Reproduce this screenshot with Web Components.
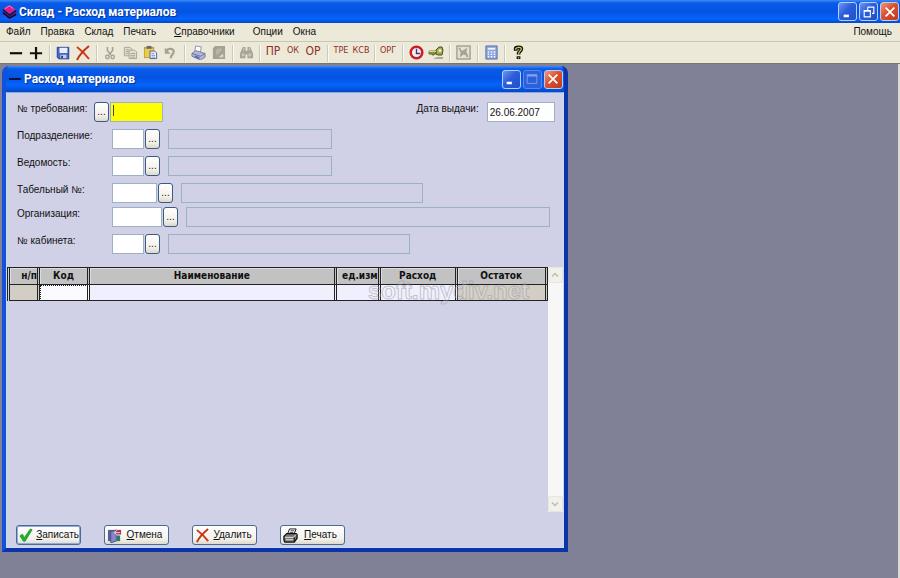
<!DOCTYPE html>
<html lang="ru">
<head>
<meta charset="utf-8">
<title>Склад - Расход материалов</title>
<style>
  html, body { margin: 0; height: 100%; }
  body { font: 10px/14px "Liberation Sans", sans-serif; color: #111; background: #808096; overflow: hidden; }
</style>
</head>
<body>
<stock-app></stock-app>

<script>
const define = (name, html, setup) => {
  const tpl = document.createElement('template');
  tpl.innerHTML = html;
  customElements.define(name, class extends HTMLElement {
    constructor() {
      super();
      this.attachShadow({ mode: 'open' }).append(tpl.content.cloneNode(true));
    }
    connectedCallback() { if (setup && !this.ready) { this.ready = true; setup(this, this.shadowRoot); } }
  });
};

const svg = (size, body) => `<svg width="${size}" height="${size}" viewBox="0 0 16 16" fill="none" aria-hidden="true">${body}</svg>`;

const ICONS = {
  books: '<path d="M1 5 8 1l7 5-7 5z" fill="#d0208c"/><path d="m1 5 7 6v2L1 7zM8 11l7-5v2l-7 5z" fill="#16103c"/><path d="m1 8 7 5 7-4v3l-7 4-7-5z" fill="#6a1166"/><path d="m3 5 5-3 4 3" stroke="#ff7cc8"/><path d="m1 9 7 6 7-4" stroke="#120a2a" stroke-width="1.4"/>',
  minus: '<path d="M1 7h14v2.500H1z" fill="#111"/>',
  plus: '<path d="M1 7h14v2.500H1zM6.800 1h2.500v14H6.800z" fill="#111"/>',
  save: '<path d="M1 1h14v14H3l-2-2z" fill="#4668c8"/><path d="M4 1h9v7H4z" fill="#e8eefc"/><path d="M5 10h7v5H5z" fill="#c8cce0"/><path d="M6 11h2v3H6z" fill="#24387e"/><path d="M1.500 1.500h13v13h-11l-2-2z" stroke="#32489c"/>',
  cross: '<path d="M2 2c4 3 9 8 12 12" stroke="#d23a18" stroke-width="2"/><path d="M14 1C9 5 5 9 2 15" stroke="#c23418" stroke-width="2"/>',
  cut: '<path d="M5 1v4l4 5M11 1v4l-4 5" stroke="#a5a294" stroke-width="1.800"/><circle cx="5" cy="12.500" r="2" stroke="#a5a294" stroke-width="1.600"/><circle cx="11" cy="12.500" r="2" stroke="#a5a294" stroke-width="1.600"/>',
  copy: '<path d="M1.500 2.500h6l2 2v7h-8z" fill="#e2dfd0" stroke="#a5a294"/><path d="M6.500 5.500h6l2 2v7h-8z" fill="#e2dfd0" stroke="#a5a294"/><path d="M3 5h3M3 7h3M3 9h3M8 9h5M8 11h5M8 13h5" stroke="#a5a294"/>',
  paste: '<path d="M1 2h11v12H1z" fill="#c8a038"/><path d="M2 4h9v9H2z" fill="#e8cc50"/><path d="M4 1h5v3H4z" fill="#666a78"/><path d="M7.500 6.500h5l2 2v6h-7z" fill="#f4f6ff" stroke="#4a5a9a"/><path d="M9 9h3M9 11h4M9 13h4" stroke="#7c8cc4"/>',
  undo: '<path d="M3 5c3-4 10-3 10 1 0 4-4 4-4 9" stroke="#a5a294" stroke-width="3"/><path d="M1 1v8h8z" fill="#a5a294"/>',
  printer: '<path d="m5 1 6 1-1 6-6-1z" fill="#fff" stroke="#8890b4"/><path d="m1 9 4-3 10 3v4l-5 3-9-4z" fill="#b4b8d4" stroke="#777ca0"/><path d="m1 9 9 3 5-3" stroke="#6c7098"/><path d="m4 12 5 2" stroke="#4a68d0" stroke-width="2"/>',
  preview: '<path d="M4 1h11v14H2V4z" fill="#a5a294"/><path d="M5 8a4 4 0 0 1 7-3l-6 6z" fill="#b9b6a8"/><path d="m8 13 5-4v4z" fill="#dedbcc"/>',
  find: '<path d="M4 2h3v4h2V2h3l3 7v5H9v-4H7v4H1V9z" fill="#a8a597"/><path d="M3 9h3v3H3zM10 9h3v3h-3z" fill="#c9c6b7"/><path d="M5 3v3M11 3v3" stroke="#d0cdbe"/>',
  clock: '<circle cx="8" cy="8" r="6.200" fill="#f7edf4" stroke="#cc1c24" stroke-width="2.600"/><path d="M8 4v5h4" stroke="#3a3a7c" stroke-width="1.500"/>',
  key: '<path d="M9 12h6v2H5z" fill="#aaa799"/><path d="M1 6h8v3H6v1H4V9H1z" fill="#8b9040" stroke="#5c602c" stroke-width=".8"/><path d="m8 5 3-3h3l1 3-1 5h-4L8 9z" fill="#a8ac48" stroke="#4c5020"/><circle cx="12" cy="5.500" r="1.500" fill="#ece9d8"/><path d="M1 6.500h7" stroke="#d6da84"/>',
  frame: '<path d="M1 1h14v14H1z" fill="#e4e1d2" stroke="#a5a294" stroke-width="1.600"/><path d="m3 4 4 2 5-3-1 4 2 5-5-2-4 3 1-5z" fill="#a5a294"/><path d="M3 3h2v2H3zM11 11h2v2h-2z" fill="#a5a294"/>',
  calc: '<path d="M2 1h12v14H2z" fill="#8fa3dc" stroke="#5570ac"/><path d="M4 3h8v2H4z" fill="#eef4ff"/><path d="M4 7.500h8M4 10h8M4 12.500h8" stroke="#fff" stroke-width="1.500" stroke-dasharray="1.600 1.600"/>',
  help: '<path d="M5 6V4c0-2 6-2 6 0 0 3-3 2-3 6" stroke="#111" stroke-width="4"/><path d="M6 12h4v3H6z" fill="#111"/><path d="M5 5V4c1-2 6-2 6 0 0 3-3 2-3 6" stroke="#c8cc4a" stroke-width="1.400"/><path d="M7.300 13h1.400v1.300H7.300z" fill="#c8cc4a"/>',
  check: '<path d="m1 9 3-2 2 4 7-10 2 1L7 15H5z" fill="#20b428" stroke="#128a1a" stroke-width=".8"/>',
  exit: '<path d="M1 2h7v12H1z" fill="#5a5e9c"/><path d="m4 4 6-2v12l-6 2z" fill="#8488c8" stroke="#44487c" stroke-width=".8"/><path d="M9 2h6v5H9z" fill="#b42c58"/><path d="M8 5h6M11 2 8 5l3 3" stroke="#f2d6e4"/><path d="M10 8h4v6h-4z" fill="#2c7c68"/>',
  print: '<path d="m5 6 2-5h7l-2 5z" fill="#fff" stroke="#111"/><path d="M8 3h4M7 5h4" stroke="#333"/><path d="m1 9 3-3h10l1 1v4l-3 4H2l-1-2z" fill="#777" stroke="#111" stroke-width="1.400"/><path d="M2 10h9l3-3M3 12.500h8" stroke="#e8e8e8"/><path d="M12 10v4" stroke="#111"/>',
  wmin: '<path d="M3 11h6v3H3z" fill="#fff"/>',
  wmax: '<path d="M2.500 3h11v10h-11z" stroke="#7fa4ee"/><path d="M2.500 4h11" stroke="#7fa4ee" stroke-width="2"/>',
  wrestore: '<path d="M6.500 2.500h7v7h-2M6.500 2.500V6" stroke="#fff" stroke-width="1.300"/><path d="M2.500 6.500h7v7h-7zM3 7h6" stroke="#fff" stroke-width="1.300"/>',
  wclose: '<path d="m3 3 10 10M13 3 3 13" stroke="#fff" stroke-width="2"/>',
  up: '<path d="m4 10 4-4 4 4" stroke="#bdbdb4" stroke-width="2"/>',
  down: '<path d="m4 6 4 4 4-4" stroke="#bdbdb4" stroke-width="2"/>'
};

define('app-icon', `<style>:host{display:inline-flex;flex:none}svg{display:block}</style><span></span>`,
  (el, root) => { root.querySelector('span').innerHTML = svg(el.getAttribute('size') || 14, ICONS[el.getAttribute('name')]); });

define('caption-button', `
<style>
  :host { display: block; flex: none; }
  button { display: grid; place-items: center; box-sizing: border-box; width: 19px; height: 19px; padding: 0; border: 1px solid #b8cdf8; border-radius: 3px;
    background: linear-gradient(135deg, #6c98f4, #2a5cdc 45%, #2350c4); }
  :host([kind=wclose]) button { background: linear-gradient(135deg, #f0987c, #dc5030 45%, #bc3c1c); }
  :host([muted]) button { border-color: #5c86e4; background: #2c60dc; }
</style>
<button type="button"></button>`,
  (el, root) => {
    const button = root.querySelector('button');
    button.innerHTML = svg(14, ICONS[el.getAttribute('kind')]);
    button.setAttribute('aria-label', el.getAttribute('label'));
  });

define('title-bar', `
<style>
  :host { display: flex; align-items: center; gap: 2px; box-sizing: border-box; height: 23px; padding: 0 1px 0 2px; color: #fff;
    background: linear-gradient(#3c8cf8 0, #0a5ae8 3px, #0454e4 12px, #0464fc 19px, #0448c8 100%);
    font: bold 12px/16px Roboto, "Liberation Sans", sans-serif; text-shadow: 1px 1px 1px #10308c; }
  h1 { flex: 1; min-width: 0; margin: 0; font: inherit; white-space: nowrap; }
  .icon { display: flex; }
</style>
<span class="icon"><slot name="icon"></slot></span><h1><slot></slot></h1><slot name="buttons"></slot>`);

define('menu-bar', `
<style>
  :host { display: block; background: #ece9d8; border-bottom: 1px solid #c9c6b8; box-shadow: 0 1px #fbfaf4; }
  nav { display: flex; gap: 10px; padding: 1px 8px 2px 6px; }
  button { padding: 0; border: 0; background: none; color: inherit; font: inherit; line-height: 15px; }
  .spaced { margin: 0 8px; }
  .last { margin-left: auto; }
</style>
<nav>
  <button type="button">Файл</button><button type="button">Правка</button><button type="button">Склад</button><button type="button">Печать</button>
  <button type="button" class="spaced"><u>С</u>правочники</button><button type="button">Опции</button><button type="button">Окна</button>
  <button type="button" class="last">Помощь</button>
</nav>`);

define('tool-button', `
<style>
  :host { display: block; flex: none; width: 20px; }
  button { display: grid; place-items: center; box-sizing: border-box; width: 100%; height: 20px; padding: 0 0 1px; border: 0; background: none;
    color: #903028; font: 9px/14px "DejaVu Sans Condensed", "DejaVu Sans", sans-serif; white-space: nowrap; }
  :host([text]) button { padding-bottom: 6px; }
  :host([big]) button { font-size: 12px; padding-bottom: 4px; }
</style>
<button type="button"><slot></slot></button>`,
  (el, root) => { if (el.title) root.querySelector('button').setAttribute('aria-label', el.title); });

define('tool-sep', `
<style>
  :host { display: grid; place-items: center; flex: none; width: 7px; }
  :host([wide]) { width: 8px; }
  i { width: 1px; height: 17px; background: #cdcabb; box-shadow: 1px 0 #faf9f2; }
</style><i></i>`);

define('tool-bar', `
<style>
  :host { display: flex; align-items: center; padding: 1px 6px 0; height: 20px; background: #ece9d8; border-bottom: 1px solid #77756c; }
</style><slot></slot>`);

define('lookup-row', `
<style>
  :host { display: flex; align-items: flex-start; --code: 32px; --name: 164px; }
  label { flex: none; width: 95px; line-height: 14px; white-space: nowrap; }
  input { box-sizing: border-box; height: 20px; border: 1px solid #9cb0c8; padding: 0 3px; font: inherit; min-width: 0; }
  .code { flex: none; width: var(--code); background: #fff; }
  button { flex: none; width: 15px; height: 20px; margin: 0 8px 0 1px; padding: 0; border: 1px solid #3a5c84; border-radius: 3px;
    background: linear-gradient(#fff, #f2f0e8 70%, #dcd8cc); color: #222; font: inherit; }
  .name { flex: 0 1 var(--name); background: #d0d0e6; }
</style>
<label for="code"></label><input id="code" class="code"><button type="button">...</button><input class="name" readonly>`,
  (el, root) => {
    const text = el.getAttribute('label');
    root.querySelector('label').textContent = text;
    root.querySelector('button').setAttribute('title', text);
    root.querySelector('.name').setAttribute('aria-label', text);
  });

define('request-row', `
<style>
  :host { display: flex; align-items: flex-start; }
  label { line-height: 14px; white-space: nowrap; }
  .number { width: 77px; }
  .date { margin: 0 8px 0 auto; }
  input { box-sizing: border-box; height: 20px; border: 1px solid #9cb0c8; padding: 0 2px; font: inherit; color: #111; }
  #number { width: 53px; background: #ff0; }
  #date { width: 68px; background: #fff; }
  button { flex: none; width: 15px; height: 20px; margin-right: 1px; padding: 0; border: 1px solid #3a5c84; border-radius: 3px;
    background: linear-gradient(#fff, #f2f0e8 70%, #dcd8cc); color: #222; font: inherit; }
  .caret { display: flex; position: relative; }
  .caret::after { content: ""; position: absolute; left: 3px; top: 3px; width: 1px; height: 11px; background: #444; }
</style>
<label class="number" for="number">№ требования:</label><button type="button" title="№ требования">...</button>
<span class="caret"><input id="number"></span>
<label class="date" for="date">Дата выдачи:</label><input id="date" value="26.06.2007">`);

define('items-grid', `
<style>
  :host { display: flex; flex: 1; min-height: 0; position: relative; }
  .sheet { flex: 1; min-width: 0; }
  table { width: 100%; table-layout: fixed; border-spacing: 0; border-top: 1px solid #222; border-left: 3px double #222; }
  th, td { box-sizing: border-box; height: 16px; padding: 0; border-right: 3px double #222; border-bottom: 1px solid #222; overflow: hidden; white-space: nowrap; }
  th { height: 17px; background: #c2c2c2; font: bold 10px/14px "DejaVu Sans Condensed", "DejaVu Sans", sans-serif; color: #111; box-shadow: inset 1px 1px #ddd; }
  td { background: #f0effd; }
  .side { background: #d2cec4; }
  .focus { outline: 1px dotted #222; outline-offset: -1px; background: #fafaff; }
  .no { width: 30px; text-align: right; } .code { width: 50px; } .unit { width: 44px; text-align: right; } .out { width: 77px; } .rest { width: 90px; }
  .scroll { display: flex; flex-direction: column; justify-content: space-between; width: 15px; background: #f7f7f7; }
  .scroll button { display: grid; place-items: center; box-sizing: border-box; width: 15px; height: 16px; padding: 0; border: 1px solid #e6e6dc; border-radius: 2px; background: #f1f1ea; }
  .mark { position: absolute; left: 361px; top: 12px; font: bold 24px/24px "Liberation Sans", sans-serif;
    color: #ffffff22; -webkit-text-stroke: 1px #9c9ca890; pointer-events: none; white-space: nowrap; }
</style>
<div class="sheet">
<table>
  <thead><tr><th class="no">н/п</th><th class="code">Код</th><th>Наименование</th><th class="unit">ед.изм</th><th class="out">Расход</th><th class="rest">Остаток</th></tr></thead>
  <tbody><tr><td class="side"></td><td class="focus"></td><td></td><td></td><td></td><td class="side"></td></tr></tbody>
</table>
</div>
<div class="scroll"><button type="button" aria-label="Вверх"><app-icon name="up" size="12"></app-icon></button><button type="button" aria-label="Вниз"><app-icon name="down" size="12"></app-icon></button></div>
<span class="mark">soft.mydiv.net</span>`);

define('action-button', `
<style>
  :host { display: block; flex: none; width: 65px; }
  button { display: flex; align-items: center; box-sizing: border-box; width: 100%; height: 20px; padding: 0 1px 0 2px; border: 1px solid #4a6c94; border-radius: 3px;
    background: linear-gradient(#fff, #f4f2ec 70%, #dedacf); color: inherit; font: inherit; white-space: nowrap; }
  :host([primary]) button { box-shadow: inset 0 0 0 1px #8cacdc; }
  span { flex: 1; text-align: center; }
  :host([primary]) span { text-align: right; }
</style>
<button type="button"><slot name="icon"></slot><span><slot></slot></span></button>`);

define('mdi-window', `
<style>
  :host { display: flex; flex-direction: column; box-sizing: border-box; border: 4px solid; border-top: 0; border-radius: 7px 7px 0 0;
    border-color: #0c3cc4 #0c34a8 #0c34a8 #1450d8; overflow: hidden; background: #0c44cc; }
  title-bar { height: 26px; padding: 0 1px 0 2px; }
  .body { display: flex; flex: 1; flex-direction: column; min-height: 0; border: 1px solid #c4dcf8; border-top-color: #88a8e0; background: #d0d0e6; }
  .minus { width: 12px; height: 2px; margin: 0 1px; background: #0a1440; }
  form { display: grid; gap: 7px; padding: 9px 8px 0 10px; }
  .pair { display: grid; gap: 7px; margin-top: -3px; }
  items-grid { margin-top: 13px; margin-bottom: 13px; }
  footer { display: flex; gap: 23px; padding: 0 9px 2px; }
</style>
<title-bar><i slot="icon" class="minus"></i>Расход материалов
  <caption-button slot="buttons" kind="wmin" label="Свернуть"></caption-button>
  <caption-button slot="buttons" kind="wmax" label="Развернуть" muted></caption-button>
  <caption-button slot="buttons" kind="wclose" label="Закрыть"></caption-button>
</title-bar>
<div class="body">
  <form>
    <request-row></request-row>
    <lookup-row label="Подразделение:"></lookup-row>
    <lookup-row label="Ведомость:"></lookup-row>
    <lookup-row label="Табельный №:" style="--code:45px;--name:242px"></lookup-row>
    <div class="pair">
      <lookup-row label="Организация:" style="--code:50px;--name:364px"></lookup-row>
      <lookup-row label="№ кабинета:" style="--name:242px"></lookup-row>
    </div>
  </form>
  <items-grid></items-grid>
  <footer>
    <action-button primary><app-icon slot="icon" name="check" size="14"></app-icon><u>З</u>аписать</action-button>
    <action-button><app-icon slot="icon" name="exit" size="15"></app-icon><u>О</u>тмена</action-button>
    <action-button><app-icon slot="icon" name="cross" size="15"></app-icon><u>У</u>далить</action-button>
    <action-button><app-icon slot="icon" name="print" size="15"></app-icon><u>П</u>ечать</action-button>
  </footer>
</div>`);

define('stock-app', `
<style>
  :host { display: flex; flex-direction: column; height: 100%; }
  main { position: relative; flex: 1; min-height: 0; background: #808096; border-right: 2px solid #dcd9cc; }
  mdi-window { position: absolute; left: 2px; top: 2px; bottom: 26px; width: 63%; min-width: 540px; }
</style>
<title-bar><app-icon slot="icon" name="books" size="15"></app-icon>Склад - Расход материалов
  <caption-button slot="buttons" kind="wmin" label="Свернуть"></caption-button>
  <caption-button slot="buttons" kind="wrestore" label="Восстановить"></caption-button>
  <caption-button slot="buttons" kind="wclose" label="Закрыть"></caption-button>
</title-bar>
<menu-bar></menu-bar>
<tool-bar>
  <tool-button title="Убрать"><app-icon name="minus"></app-icon></tool-button><tool-button title="Добавить"><app-icon name="plus"></app-icon></tool-button>
  <tool-sep></tool-sep>
  <tool-button title="Сохранить"><app-icon name="save"></app-icon></tool-button><tool-button title="Удалить"><app-icon name="cross" size="16"></app-icon></tool-button>
  <tool-sep></tool-sep>
  <tool-button title="Вырезать"><app-icon name="cut"></app-icon></tool-button><tool-button title="Копировать"><app-icon name="copy" size="15"></app-icon></tool-button><tool-button title="Вставить"><app-icon name="paste" size="15"></app-icon></tool-button><tool-button title="Отменить"><app-icon name="undo" size="12"></app-icon></tool-button>
  <tool-sep wide></tool-sep>
  <tool-button title="Печать"><app-icon name="printer" size="15"></app-icon></tool-button><tool-button title="Просмотр"><app-icon name="preview" size="15"></app-icon></tool-button>
  <tool-sep wide></tool-sep>
  <tool-button title="Найти"><app-icon name="find" size="15"></app-icon></tool-button>
  <tool-sep></tool-sep>
  <tool-button text big>ПР</tool-button><tool-button text>ОК</tool-button><tool-button text big>ОР</tool-button>
  <tool-sep wide></tool-sep>
  <tool-button text>ТРЕ</tool-button><tool-button text>КСВ</tool-button>
  <tool-sep></tool-sep>
  <tool-button text>ОРГ</tool-button>
  <tool-sep wide></tool-sep>
  <tool-button title="Время"><app-icon name="clock" size="15"></app-icon></tool-button><tool-button title="Ключ"><app-icon name="key" size="16"></app-icon></tool-button>
  <tool-sep></tool-sep>
  <tool-button title="Окно"><app-icon name="frame" size="15"></app-icon></tool-button>
  <tool-sep wide></tool-sep>
  <tool-button title="Калькулятор"><app-icon name="calc" size="15"></app-icon></tool-button>
  <tool-sep></tool-sep>
  <tool-button title="Справка"><app-icon name="help" size="15"></app-icon></tool-button>
</tool-bar>
<main><mdi-window></mdi-window></main>`);
</script>
</body>
</html>
